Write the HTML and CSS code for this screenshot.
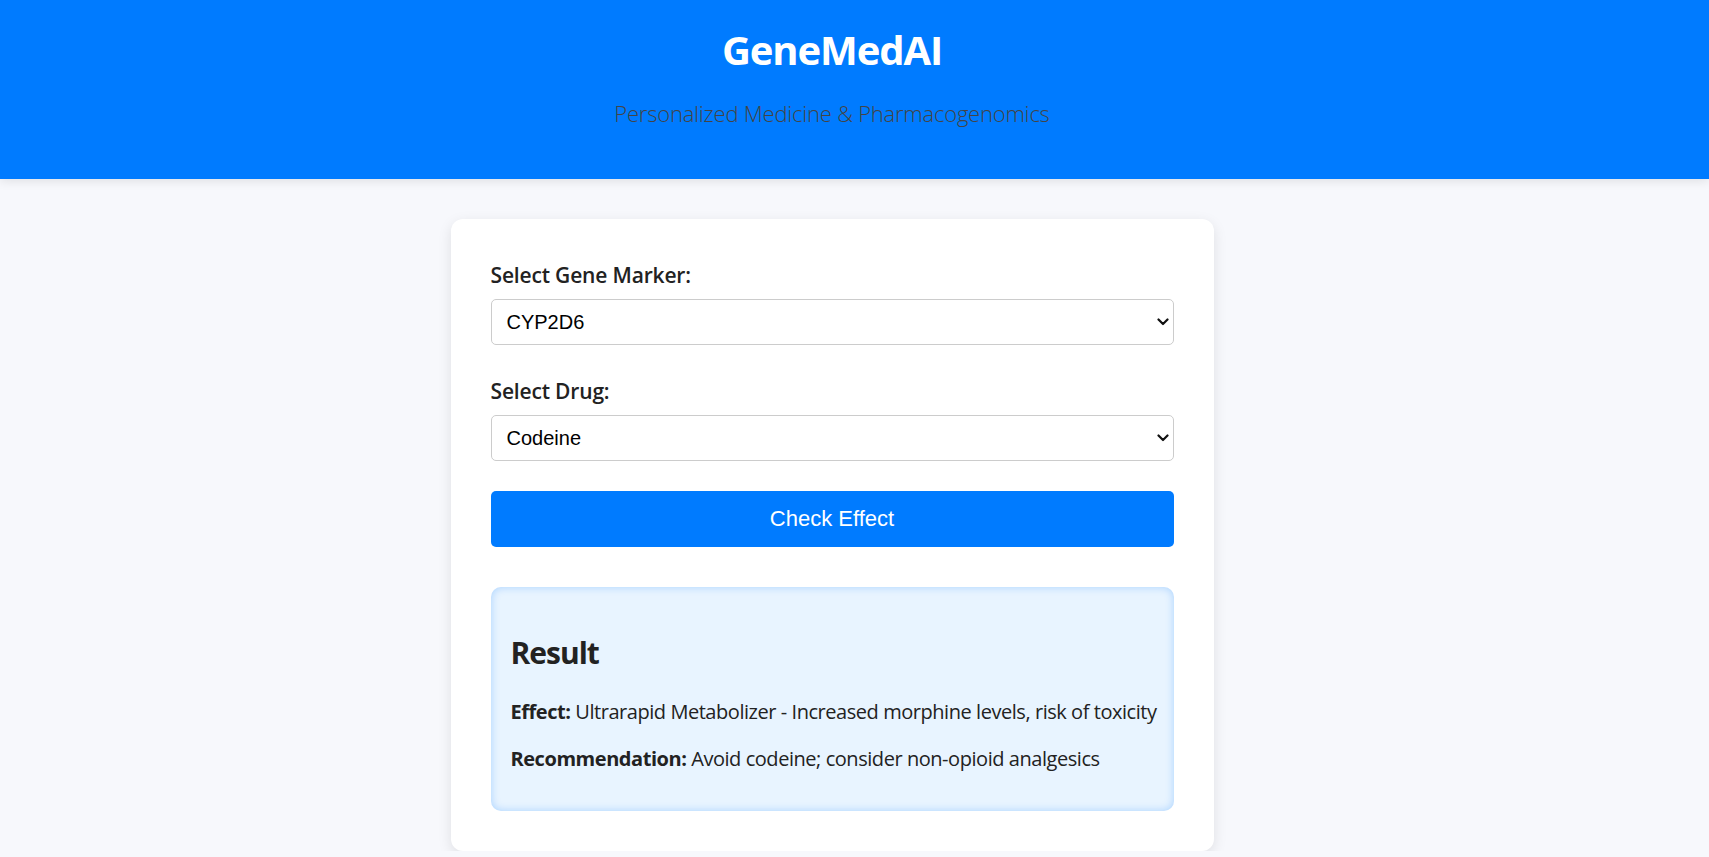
FILE: index.html
```html
<!DOCTYPE html>
<html lang="en">
<head>
<meta charset="utf-8">
<title>GeneMedAI</title>
<link rel="stylesheet" href="styles.css">
</head>
<body>
<header class="site-header">
  <h1 class="site-title">GeneMedAI</h1>
  <p class="site-subtitle">Personalized Medicine &amp; Pharmacogenomics</p>
</header>
<main class="page">
  <section class="card">
    <div class="field">
      <label class="field-label" for="gene">Select Gene Marker:</label>
      <div class="select-wrap">
        <select id="gene" class="select">
          <option>CYP2D6</option>
          <option>CYP2C19</option>
          <option>SLCO1B1</option>
        </select>
        <svg class="chevron" viewBox="0 0 12 8" width="12" height="8" aria-hidden="true"><path d="M1.5 1.5 L6 6 L10.5 1.5" fill="none" stroke="#111" stroke-width="2.2" stroke-linecap="round" stroke-linejoin="round"/></svg>
      </div>
    </div>
    <div class="field">
      <label class="field-label" for="drug">Select Drug:</label>
      <div class="select-wrap">
        <select id="drug" class="select">
          <option>Codeine</option>
          <option>Clopidogrel</option>
          <option>Simvastatin</option>
        </select>
        <svg class="chevron" viewBox="0 0 12 8" width="12" height="8" aria-hidden="true"><path d="M1.5 1.5 L6 6 L10.5 1.5" fill="none" stroke="#111" stroke-width="2.2" stroke-linecap="round" stroke-linejoin="round"/></svg>
      </div>
    </div>
    <button class="btn" type="button">Check Effect</button>
    <div class="result">
      <h2 class="result-title">Result</h2>
      <p class="result-line"><strong>Effect:</strong> Ultrarapid Metabolizer - Increased morphine levels, risk of toxicity</p>
      <p class="result-line"><strong>Recommendation:</strong> Avoid codeine; consider non-opioid analgesics</p>
    </div>
  </section>
</main>
</body>
</html>
```
FILE: styles.css
```css
* { box-sizing: border-box; }

html, body {
  margin: 0;
  padding: 0;
}

body {
  background: #f7f8fc;
  font-family: "Open Sans", "Noto Sans", sans-serif;
  font-size: 20px;
  color: #222;
}

.site-header {
  background: #007bff;
  padding: 26px 45px 50px 0;
  text-align: center;
  box-shadow: 0 2px 10px rgba(0, 0, 0, 0.1);
}

.site-title {
  margin: 0;
  font-size: 40px;
  line-height: 48px;
  font-weight: 700;
  letter-spacing: -1.1px;
  color: #fff;
}

.site-subtitle {
  margin: 23px 0 0;
  font-size: 22px;
  line-height: 32px;
  font-weight: 300;
  letter-spacing: -0.22px;
  color: #444;
}

.page {
  padding: 40px 45px 0 0;
}

.card {
  width: 763px;
  margin: 0 auto;
  background: #fff;
  border-radius: 12px;
  padding: 40px;
  box-shadow: 0 4px 14px rgba(0, 0, 0, 0.1);
}

.field {
  margin-bottom: 30px;
}

.field-label {
  display: block;
  font-size: 21px;
  line-height: 32px;
  font-weight: 600;
  letter-spacing: -0.17px;
  color: #222;
  margin-bottom: 8px;
}

.select-wrap {
  position: relative;
}

.select {
  display: block;
  width: 100%;
  height: 46px;
  -webkit-appearance: none;
  appearance: none;
  border: 1px solid #ccc;
  border-radius: 5px;
  background: #fff;
  padding: 0 36px 0 15px;
  font-family: "Liberation Sans", Arial, sans-serif;
  font-size: 20px;
  color: #000;
}

.chevron {
  position: absolute;
  right: 5px;
  top: 19px;
  width: 12px;
  height: 8px;
  pointer-events: none;
}

.btn {
  display: block;
  width: 100%;
  height: 56px;
  border: none;
  border-radius: 5px;
  background: #007bff;
  color: #fff;
  font-family: "Liberation Sans", Arial, sans-serif;
  font-size: 22px;
  cursor: pointer;
}

.result {
  margin-top: 40px;
  background: #e8f4ff;
  border-radius: 10px;
  padding: 20px 18px 19px 18px;
  box-shadow: inset 0 0 8px rgba(0, 123, 255, 0.28);
}

.result-title {
  margin: 26px 2px 25px;
  font-size: 30px;
  line-height: 40px;
  font-weight: 700;
  letter-spacing: -1px;
  color: #222;
}

.result-line {
  margin: 0 2px 20px;
  font-size: 20px;
  line-height: 27px;
  letter-spacing: -0.45px;
  white-space: nowrap;
  color: #222;
}

.result-line strong {
  font-weight: 700;
}
```
